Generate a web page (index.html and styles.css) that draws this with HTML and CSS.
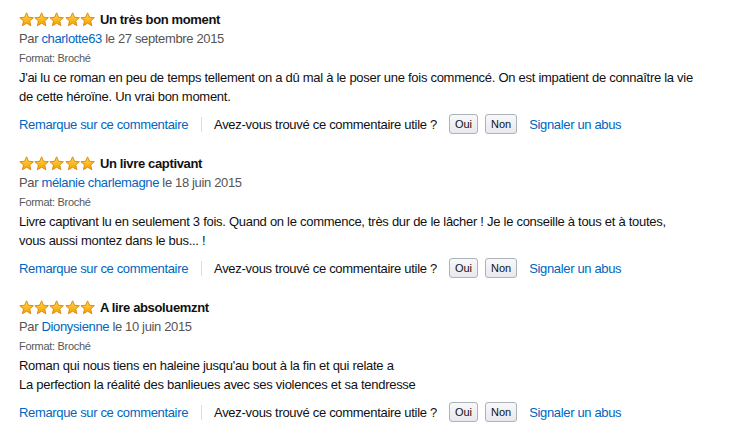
FILE: index.html
```html
<!DOCTYPE html>
<html lang="fr">
<head>
<meta charset="utf-8">
<link rel="stylesheet" href="styles.css">
</head>
<body>
<svg width="0" height="0" class="defs">
  <defs>
    <linearGradient id="sg" x1="0" y1="0" x2="0" y2="1">
      <stop offset="0" stop-color="#ffd84a"/>
      <stop offset="1" stop-color="#f7a000"/>
    </linearGradient>
    <symbol id="star" viewBox="0 0 16 16">
      <polygon points="8,0.9 10.1,5.6 15.2,6.1 11.3,9.5 12.5,14.6 8,11.9 3.5,14.6 4.7,9.5 0.8,6.1 5.9,5.6" fill="url(#sg)" stroke="#d9870f" stroke-width="1" stroke-linejoin="round"/>
    </symbol>
  </defs>
</svg>
<div class="reviews">
  <div class="review">
    <div class="title-row">
      <span class="stars"><svg class="star"><use href="#star"/></svg><svg class="star"><use href="#star"/></svg><svg class="star"><use href="#star"/></svg><svg class="star"><use href="#star"/></svg><svg class="star"><use href="#star"/></svg></span>
      <span class="title">Un très bon moment</span>
    </div>
    <div class="by">Par <a class="link">charlotte63</a> le 27 septembre 2015</div>
    <div class="format">Format: Broché</div>
    <div class="body">J'ai lu ce roman en peu de temps tellement on a dû mal à le poser une fois commencé. On est impatient de connaître la vie<br>de cette héroïne. Un vrai bon moment.</div>
    <div class="actions">
      <a class="link">Remarque sur ce commentaire</a>
      <span class="sep"></span>
      <span class="q">Avez-vous trouvé ce commentaire utile ?</span>
      <span class="btns"><span class="btn">Oui</span><span class="btn">Non</span></span>
      <a class="link abuse">Signaler un abus</a>
    </div>
  </div>
  <div class="review">
    <div class="title-row">
      <span class="stars"><svg class="star"><use href="#star"/></svg><svg class="star"><use href="#star"/></svg><svg class="star"><use href="#star"/></svg><svg class="star"><use href="#star"/></svg><svg class="star"><use href="#star"/></svg></span>
      <span class="title">Un livre captivant</span>
    </div>
    <div class="by">Par <a class="link">mélanie charlemagne</a> le 18 juin 2015</div>
    <div class="format">Format: Broché</div>
    <div class="body">Livre captivant lu en seulement 3 fois. Quand on le commence, très dur de le lâcher ! Je le conseille à tous et à toutes,<br>vous aussi montez dans le bus... !</div>
    <div class="actions">
      <a class="link">Remarque sur ce commentaire</a>
      <span class="sep"></span>
      <span class="q">Avez-vous trouvé ce commentaire utile ?</span>
      <span class="btns"><span class="btn">Oui</span><span class="btn">Non</span></span>
      <a class="link abuse">Signaler un abus</a>
    </div>
  </div>
  <div class="review">
    <div class="title-row">
      <span class="stars"><svg class="star"><use href="#star"/></svg><svg class="star"><use href="#star"/></svg><svg class="star"><use href="#star"/></svg><svg class="star"><use href="#star"/></svg><svg class="star"><use href="#star"/></svg></span>
      <span class="title">A lire absoluemznt</span>
    </div>
    <div class="by">Par <a class="link">Dionysienne</a> le 10 juin 2015</div>
    <div class="format">Format: Broché</div>
    <div class="body">Roman qui nous tiens en haleine jusqu'au bout à la fin et qui relate a<br>La perfection la réalité des banlieues avec ses violences et sa tendresse</div>
    <div class="actions">
      <a class="link">Remarque sur ce commentaire</a>
      <span class="sep"></span>
      <span class="q">Avez-vous trouvé ce commentaire utile ?</span>
      <span class="btns"><span class="btn">Oui</span><span class="btn">Non</span></span>
      <a class="link abuse">Signaler un abus</a>
    </div>
  </div>
</div>
</body>
</html>
```
FILE: styles.css
```css
html, body {
  margin: 0;
  padding: 0;
  background: #ffffff;
}
body {
  font-family: "Liberation Sans", Arial, sans-serif;
  font-size: 13px;
  letter-spacing: -0.35px;
  color: #111111;
}
.defs {
  position: absolute;
  width: 0;
  height: 0;
}
.reviews {
  padding: 10px 19px 0 19px;
  width: 712px;
}
.review {
  margin-bottom: 19px;
}
.title-row {
  display: flex;
  align-items: center;
  height: 19px;
}
.stars {
  display: flex;
  margin-right: 5px;
}
.star {
  width: 15.2px;
  height: 15px;
  display: block;
}
.title {
  font-weight: bold;
  line-height: 19px;
}
.by {
  line-height: 19px;
  color: #555555;
}
.link {
  color: #0066c0;
  text-decoration: none;
}
.format {
  font-size: 11px;
  letter-spacing: -0.3px;
  line-height: 20px;
  color: #565959;
}
.body {
  line-height: 19px;
  letter-spacing: -0.28px;
  white-space: nowrap;
}
.actions {
  display: flex;
  align-items: center;
  height: 22px;
  margin-top: 7px;
}
.sep {
  width: 1px;
  height: 15px;
  background: #dddddd;
  margin: 0 12px 0 13px;
}
.q {
  letter-spacing: -0.3px;
}
.btns {
  display: flex;
  gap: 7px;
  margin-left: 12px;
  margin-right: 12px;
}
.btn {
  display: inline-flex;
  align-items: center;
  justify-content: center;
  height: 20px;
  padding: 0 5px;
  box-sizing: border-box;
  border: 1px solid #adb1b8;
  border-radius: 3px;
  background: linear-gradient(#f7f8fa, #e7e9ec);
  font-size: 11px;
  letter-spacing: 0;
  color: #111111;
}
```
